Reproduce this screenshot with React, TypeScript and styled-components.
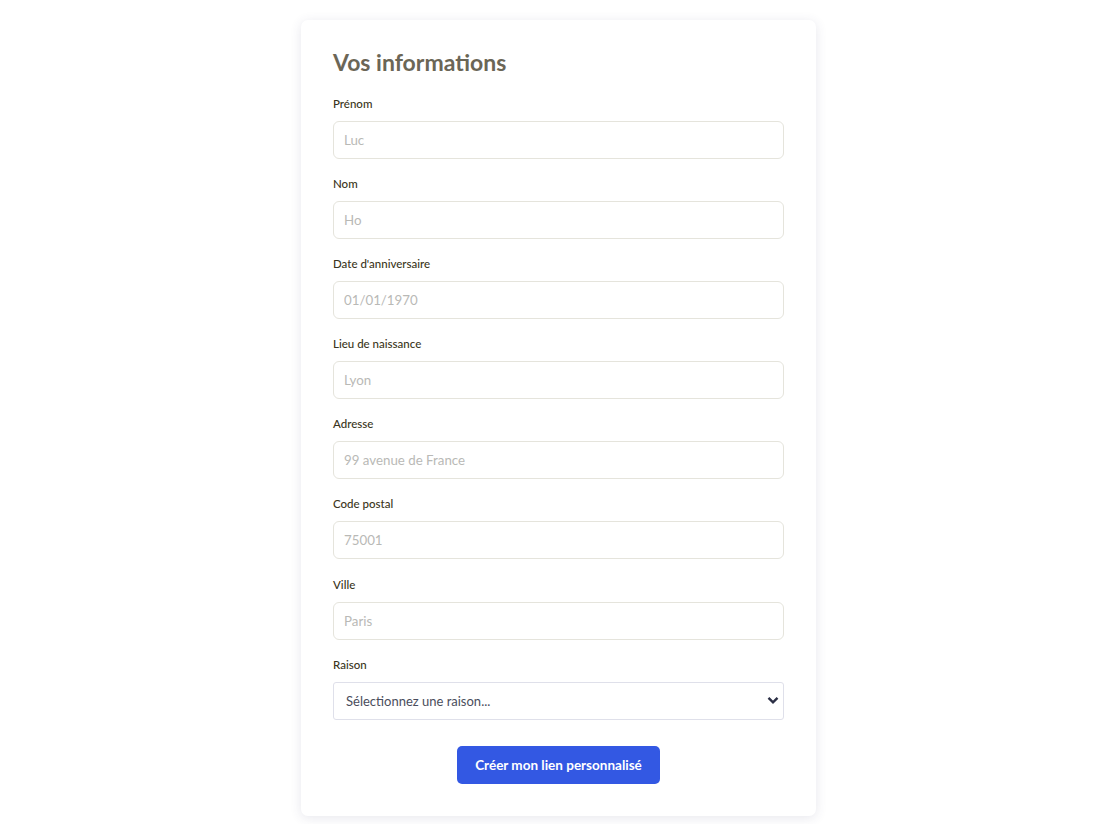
import React from "react";
import styled, { createGlobalStyle } from "styled-components";

const Global = createGlobalStyle`
  html, body { margin: 0; padding: 0; background: #ffffff; }
  body { font-family: "Lato", "Noto Sans", sans-serif; }
  * { box-sizing: border-box; }
`;

const Page = styled.div`
  display: flex;
  justify-content: center;
  padding-top: 20px;
  padding-right: 3px;
  min-height: 824px;
`;

const Card = styled.form`
  width: 515px;
  background: #fff;
  border-radius: 7px;
  box-shadow: 0 2px 12px rgba(60, 60, 110, 0.12);
  padding: 26px 32px 32px;
  display: flex;
  flex-direction: column;
  height: 796px;
`;

const Title = styled.h2`
  margin: 0 0 17px;
  font-family: "Lato", sans-serif;
  font-size: 23px;
  font-weight: 700;
  color: #6b6656;
  line-height: 32px;
`;

const Field = styled.div`
  display: flex;
  flex-direction: column;
  margin-bottom: 16.1px;
`;

const Label = styled.label`
  font-size: 11.5px;
  color: #3a3520;
  line-height: 18px;
  margin-bottom: 8px;
  font-weight: 500;
`;

const Input = styled.input`
  height: 38px;
  width: 100%;
  border: 1px solid #e5e4dc;
  border-radius: 6px;
  padding: 0 10px;
  font-family: "Lato", sans-serif;
  font-size: 13.3px;
  color: #333;
  background: #fff;
  &::placeholder { color: #b9b9b6; }
`;

const SelectWrap = styled.div`
  position: relative;
  height: 38px;
`;

const Select = styled.select`
  appearance: none;
  height: 38px;
  width: 100%;
  border: 1px solid #dfe0ea;
  border-radius: 3px;
  padding: 0 30px 0 12px;
  font-family: "Lato", sans-serif;
  font-size: 13px;
  color: #4a4d5c;
  background: #fff;
`;

const Chevron = styled.svg`
  position: absolute;
  right: 5px;
  top: 14px;
  pointer-events: none;
`;

const ButtonRow = styled.div`
  display: flex;
  justify-content: center;
  margin-top: 10.2px;
`;

const Button = styled.button`
  width: 203px;
  height: 38px;
  background: #3358e3;
  color: #fff;
  border: none;
  border-radius: 5px;
  font-family: "Lato", sans-serif;
  font-size: 13.5px;
  font-weight: 700;
`;

const fields = [
  ["Prénom", "Luc"],
  ["Nom", "Ho"],
  ["Date d'anniversaire", "01/01/1970"],
  ["Lieu de naissance", "Lyon"],
  ["Adresse", "99 avenue de France"],
  ["Code postal", "75001"],
  ["Ville", "Paris"],
];

export default function App() {
  return (
    <>
      <Global />
      <Page>
        <Card onSubmit={(e) => e.preventDefault()}>
          <Title>Vos informations</Title>
          {fields.map(([l, p]) => (
            <Field key={l}>
              <Label>{l}</Label>
              <Input placeholder={p} />
            </Field>
          ))}
          <Field>
            <Label>Raison</Label>
            <SelectWrap>
              <Select defaultValue="">
                <option value="">Sélectionnez une raison...</option>
              </Select>
              <Chevron width="12" height="9" viewBox="0 0 12 9">
                <path d="M1.5 1.8 L6 6.3 L10.5 1.8" fill="none" stroke="#2b2f45" strokeWidth="2.4" />
              </Chevron>
            </SelectWrap>
          </Field>
          <ButtonRow>
            <Button type="submit">Créer mon lien personnalisé</Button>
          </ButtonRow>
        </Card>
      </Page>
    </>
  );
}
